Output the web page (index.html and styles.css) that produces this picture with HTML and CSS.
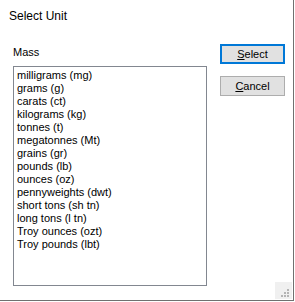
FILE: index.html
```html
<!DOCTYPE html>
<html lang="en">
<head>
  <meta charset="UTF-8">
  <title>Select Unit</title>
  <link rel="stylesheet" href="styles.css">
</head>
<body>

  <div class="dialog">
    <div class="title">Select Unit</div>

    <div class="content">
      <div class="unit-group">
        <div class="group-label">Mass</div>
        <ul class="listbox">
          <li>milligrams (mg)</li>
          <li>grams (g)</li>
          <li>carats (ct)</li>
          <li>kilograms (kg)</li>
          <li>tonnes (t)</li>
          <li>megatonnes (Mt)</li>
          <li>grains (gr)</li>
          <li>pounds (lb)</li>
          <li>ounces (oz)</li>
          <li>pennyweights (dwt)</li>
          <li>short tons (sh tn)</li>
          <li>long tons (l tn)</li>
          <li>Troy ounces (ozt)</li>
          <li>Troy pounds (lbt)</li>
        </ul>
      </div>

      <div class="actions">
        <button class="btn default"><u>S</u>elect</button>
        <button class="btn"><u>C</u>ancel</button>
      </div>
    </div>

    <svg class="grip" width="17" height="17" viewBox="0 0 17 17">
      <rect x="12" y="7" width="2" height="2" fill="#b4b4b4"/>
      <rect x="9" y="10" width="2" height="2" fill="#b4b4b4"/>
      <rect x="12" y="10" width="2" height="2" fill="#b4b4b4"/>
      <rect x="6" y="13" width="2" height="2" fill="#b4b4b4"/>
      <rect x="9" y="13" width="2" height="2" fill="#b4b4b4"/>
      <rect x="12" y="13" width="2" height="2" fill="#b4b4b4"/>
    </svg>
  </div>

</body>
</html>
```

FILE: styles.css
```css
body { margin: 0; padding: 0; background: white; font-family: "Liberation Sans", Arial, sans-serif; color: #000; }
.dialog {
  position: relative;
  width: 293px;
  height: 300px;
  background: white;
  border-right: 1px solid #707070;
  border-bottom: 1px solid #707070;
}
.title { padding: 8px 0 0 9px; font-size: 12px; line-height: 16px; }
.content { display: flex; align-items: flex-start; gap: 13px; margin-top: 20px; padding-left: 13px; }
.unit-group { margin-top: 2px; }
.group-label { font-size: 11px; line-height: 13px; margin-bottom: 7px; }
.listbox {
  list-style: none;
  margin: 0;
  padding: 2px 3px;
  width: 186px;
  height: 214px;
  border: 1px solid #828790;
  font-size: 11px;
  line-height: 13px;
}
.actions { display: flex; flex-direction: column; gap: 12px; }
.btn {
  width: 65px;
  height: 20px;
  padding: 0;
  background: #e1e1e1;
  border: 1px solid #adadad;
  font-family: inherit;
  font-size: 11px;
  color: #000;
}
.btn.default { border: 2px solid #0078d7; }
.grip { position: absolute; right: 1px; bottom: 1px; background: #f0f0f0; }
```
